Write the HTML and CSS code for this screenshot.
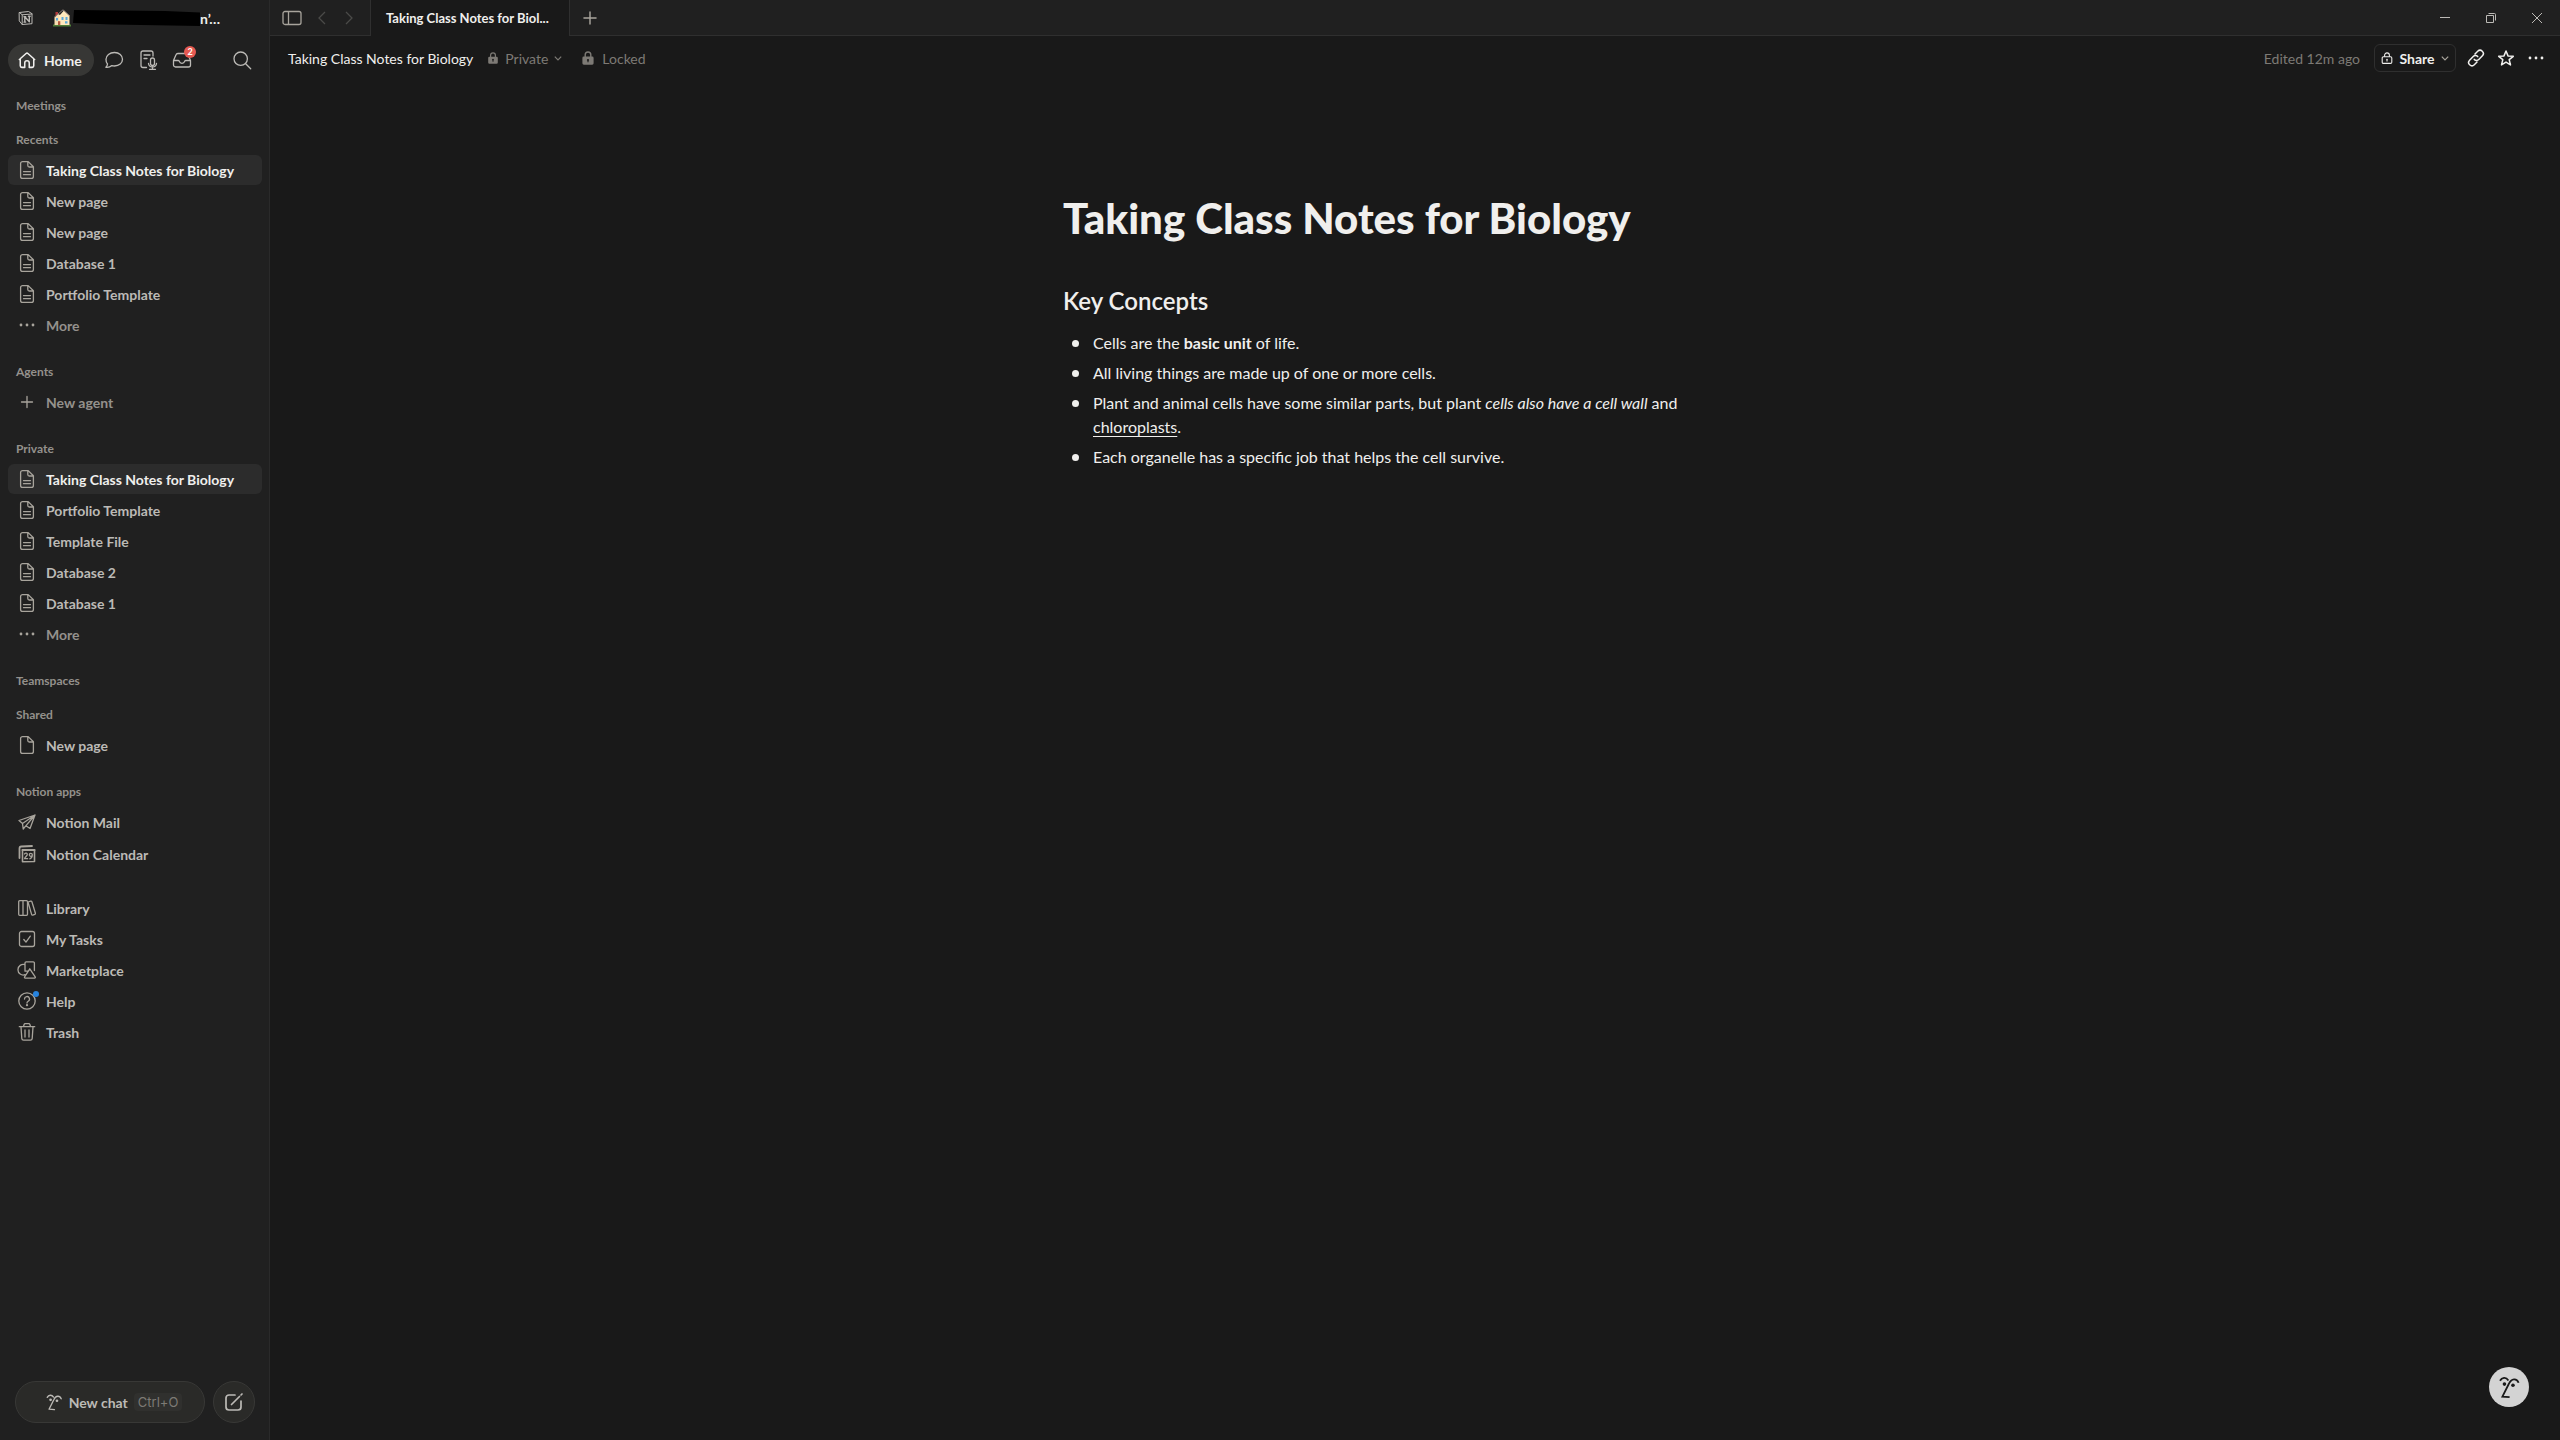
FILE: index.html
```html
<!DOCTYPE html>
<html lang="en">
<head>
  <meta charset="UTF-8">
  <meta name="viewport" content="width=device-width, initial-scale=1.0">
  <title>Taking Class Notes for Biology</title>
  <link rel="stylesheet" href="styles.css">
</head>
<body>
  <svg class="sprite" aria-hidden="true">
    <symbol id="i-page" viewBox="0 0 20 20"><path d="M5.6 1.6h5.6l5.2 5.2v9.6a2 2 0 0 1-2 2H5.6a2 2 0 0 1-2-2V3.600a2 2 0 0 1 2-2z M10.800 1.800v3.700a1.500 1.500 0 0 0 1.500 1.500h4"/></symbol>
    <symbol id="i-doc" viewBox="0 0 20 20"><use href="#i-page"/><path d="M6.500 11.600h7M6.500 14.700h7"/></symbol>
    <symbol id="i-dots" viewBox="0 0 20 20"><g fill="currentColor" stroke="none"><circle cx="4" cy="10" r="1.400"/><circle cx="10" cy="10" r="1.400"/><circle cx="16" cy="10" r="1.400"/></g></symbol>
    <symbol id="i-plus" viewBox="0 0 20 20"><path d="M10 4.500v11M4.500 10h11"/></symbol>
    <symbol id="i-chevron" viewBox="0 0 20 20"><path d="M2 6.500l8 8 8-8"/></symbol>
    <symbol id="i-lock" viewBox="0 0 20 20"><path d="M6 8.500V5.500a4 4 0 0 1 8 0v3" stroke-width="2"/><path fill="currentColor" stroke="none" fill-rule="evenodd" d="M4 8h12a2 2 0 0 1 2 2v7.500a2 2 0 0 1-2 2H4a2 2 0 0 1-2-2V10a2 2 0 0 1 2-2z M10 11.300a1.500 1.500 0 0 0-.8 2.800v2h1.600v-2a1.500 1.500 0 0 0-.8-2.800z"/></symbol>
    <symbol id="i-face" viewBox="0 0 20 20"><path stroke-width="1.500" d="M2.500 4.800C4 2 7.500 1.500 9.500 4.500M18 6.500C16.500 2.500 12 2.500 9.800 7.500L4.500 18l6 .5"/><g fill="currentColor" stroke="none"><circle cx="6.200" cy="7.600" r="1.500"/><circle cx="13.300" cy="8.600" r="1.500"/></g></symbol>
  </svg>

  <div class="app">
    <aside class="sidebar">
      <div class="workspace">
        <svg class="icon logo" viewBox="0 0 16 16"><path d="M1.500 2.500l9-1 3.500 2.200v10l-9.800.8-2.700-3.300zM1.500 2.500l2.700 2.300 9.800-.8M4.200 4.800v9.700"/><path stroke-width="1.400" d="M6.800 12V6.800l4.500 4.900V6.300M6 6.800h1.700M10.400 6.200h1.800M6 12.100h1.700"/></svg>
        <svg class="house" viewBox="0 0 18 18"><path fill="#4e7d36" d="M0 15.500h18v2H0z"/><path fill="#b23a3a" d="M2.500 3h2.500v4H2.500z"/><path fill="#f6ddb0" d="M1.500 8.500l4-3.500 4 3v8h-8z"/><path fill="#ffe9bd" d="M6 7l5-5.500 5.500 5.500v9H6z"/><path fill="none" stroke="#8d7f7a" stroke-width="1" d="M1 8.500L10 .8 17 7"/><path fill="#5ba9db" d="M3 9h2v2.500H3zM8.500 8h2v3h-2zM12.500 8h2v3h-2zM12 12.300h2.500v2.200H12z"/><path fill="#b2563d" d="M5 12.200h2.300V16H5z"/></svg>
        <svg class="redacted" viewBox="0 0 127 17"><path d="M1 0l91 1 35 1.500V16l-88-1.500L0 13z"/></svg>
        <span class="workspace-name">n’…</span>
      </div>

      <div class="shortcuts">
        <button class="home"><svg class="icon" viewBox="0 0 20 20"><path stroke-width="1.700" d="M1.500 9.500L9 2.800a1.500 1.500 0 0 1 2 0l7.500 6.700M2.500 8.700V16.500a1.700 1.700 0 0 0 1.700 1.700h3.300v-4.900a2.500 2.500 0 0 1 5 0v4.900h3.300a1.700 1.700 0 0 0 1.700-1.700V8.700"/></svg>Home</button>
        <button class="round" aria-label="Chat"><svg class="icon" viewBox="0 0 20 20"><path d="M10.500 2.500c4.700 0 8 3 8 6.800s-3.300 6.700-8 6.700c-1 0-1.800-.1-2.600-.4-1.600 1.400-3.700 2-6 1.700 1-1 1.500-2 1.600-3.300A6.700 6.700 0 0 1 2 9.300c0-3.800 3.700-6.800 8.500-6.800z"/></svg></button>
        <button class="round" aria-label="Meeting notes"><svg class="icon" viewBox="0 0 20 20"><path d="M8.500 17.500H5a2 2 0 0 1-2-2V3a2 2 0 0 1 2-2h8a2 2 0 0 1 2 2v3M6 5h6M6 8.500h3M12.500 10a2 2 0 0 1 4 0v3.500a2 2 0 0 1-4 0zM10.500 13.500c.3 2.300 2 3.500 4 3.500s3.700-1.200 4-3.500M14.500 17v2.300M11.500 19.300h6"/></svg></button>
        <button class="round" aria-label="Inbox"><svg class="icon" viewBox="0 0 20 20"><path d="M1.500 10.500L4 4.800A2 2 0 0 1 5.800 3.500h8.400A2 2 0 0 1 16 4.800l2.500 5.700v4.500a2 2 0 0 1-2 2h-13a2 2 0 0 1-2-2zM1.500 10.500h4.700c.4 0 .8.200 1 .6.500 1.500 1.500 2.200 2.800 2.200s2.300-.7 2.800-2.200c.2-.4.600-.6 1-.6h4.700"/></svg><span class="badge">2</span></button>
        <button class="round search" aria-label="Search"><svg class="icon" viewBox="0 0 20 20"><circle cx="8.700" cy="8.700" r="6.700"/><path d="M13.700 13.700l5 5"/></svg></button>
      </div>

      <nav>
        <section class="empty">
          <h2>Meetings</h2>
        </section>
        <section>
          <h2>Recents</h2>
          <a class="item active" href="#"><svg class="icon"><use href="#i-doc"/></svg>Taking Class Notes for Biology</a>
          <a class="item" href="#"><svg class="icon"><use href="#i-doc"/></svg>New page</a>
          <a class="item" href="#"><svg class="icon"><use href="#i-doc"/></svg>New page</a>
          <a class="item" href="#"><svg class="icon"><use href="#i-doc"/></svg>Database 1</a>
          <a class="item" href="#"><svg class="icon"><use href="#i-doc"/></svg>Portfolio Template</a>
          <a class="item muted" href="#"><svg class="icon"><use href="#i-dots"/></svg>More</a>
        </section>
        <section>
          <h2>Agents</h2>
          <a class="item muted" href="#"><svg class="icon"><use href="#i-plus"/></svg>New agent</a>
        </section>
        <section>
          <h2>Private</h2>
          <a class="item active" href="#"><svg class="icon"><use href="#i-doc"/></svg>Taking Class Notes for Biology</a>
          <a class="item" href="#"><svg class="icon"><use href="#i-doc"/></svg>Portfolio Template</a>
          <a class="item" href="#"><svg class="icon"><use href="#i-doc"/></svg>Template File</a>
          <a class="item" href="#"><svg class="icon"><use href="#i-doc"/></svg>Database 2</a>
          <a class="item" href="#"><svg class="icon"><use href="#i-doc"/></svg>Database 1</a>
          <a class="item muted" href="#"><svg class="icon"><use href="#i-dots"/></svg>More</a>
        </section>
        <section class="empty">
          <h2>Teamspaces</h2>
        </section>
        <section>
          <h2>Shared</h2>
          <a class="item" href="#"><svg class="icon"><use href="#i-page"/></svg>New page</a>
        </section>
        <section class="apps">
          <h2>Notion apps</h2>
          <a class="item" href="#"><svg class="icon" viewBox="0 0 20 20"><path d="M2 8.500L18 3l-5 13.500-4-2.800-2.800 3.300-.7-5.500zM5.500 11.500L18 3 9 13.700"/></svg>Notion Mail</a>
          <a class="item" href="#"><svg class="icon" viewBox="0 0 20 20"><path stroke-width="1.800" d="M2.500 14V4.500a2 2 0 0 1 1.800-2L15 2"/><path stroke-width="1.600" d="M5.500 6h12v11.500l-12 .3z"/><path stroke-width="2" d="M5.500 6h12"/><path stroke-width="1.300" d="M7.500 10c1-1.500 3-.8 2.800.7-.2 1.300-2.700 2.500-2.700 4h3M15.300 10.800a1.500 1.500 0 1 1-3 0 1.500 1.500 0 0 1 3 0c0 2.200-.8 3.500-2.500 4"/></svg>Notion Calendar</a>
        </section>
        <section>
          <a class="item" href="#"><svg class="icon" viewBox="0 0 20 20"><path d="M1.700 3.700a1 1 0 0 1 1-1H6v14.600H2.700a1 1 0 0 1-1-1zM6 2.700h3.500a1 1 0 0 1 1 1v12.600a1 1 0 0 1-1 1H6M11 4l2.700-.9a1 1 0 0 1 1.200.6l3.500 11.500a1 1 0 0 1-.6 1.200l-2 .7a1 1 0 0 1-1.200-.7z"/></svg>Library</a>
          <a class="item" href="#"><svg class="icon" viewBox="0 0 20 20"><rect x="2.500" y="2.500" width="15" height="15" rx="2"/><path d="M6.800 10.500l2.200 2.600 4.300-6"/></svg>My Tasks</a>
          <a class="item" href="#"><svg class="icon" viewBox="0 0 20 20"><path d="M8 14.700a5.300 5.300 0 1 1 0-10M8 8.500V3a1.200 1.200 0 0 1 1.200-1.200h7A1.200 1.200 0 0 1 17.400 3v7.500M12.800 8.800l5.400 8a.9.9 0 0 1-.7 1.400H8.300a.9.900 0 0 1-.7-1.400zM8 8.500v2.700h3"/></svg>Marketplace</a>
          <a class="item" href="#"><svg class="icon" viewBox="0 0 20 20"><circle cx="10" cy="10" r="8.200"/><path d="M7.500 8a2.500 2.500 0 1 1 3.700 2.200c-.8.500-1.200.9-1.200 1.800"/><circle cx="10" cy="14.200" r=".5"/></svg><span class="dot"></span>Help</a>
          <a class="item" href="#"><svg class="icon" viewBox="0 0 20 20"><path d="M2.300 4.700h15.400M6.500 4.500l.6-2a1.200 1.200 0 0 1 1.100-.8h3.600a1.200 1.200 0 0 1 1.100.8l.6 2M4 5l.8 11.500a1.800 1.800 0 0 0 1.800 1.700h6.800a1.800 1.800 0 0 0 1.800-1.700L16 5M8 8v7M12 8v7"/></svg>Trash</a>
        </section>
      </nav>

      <div class="sidebar-footer">
        <button class="new-chat"><svg class="icon"><use href="#i-face"/></svg>New chat <kbd>Ctrl+O</kbd></button>
        <button class="compose" aria-label="New page"><svg class="icon" viewBox="0 0 20 20"><path stroke-width="1.700" d="M11 3H5a3 3 0 0 0-3 3v9a3 3 0 0 0 3 3h9a3 3 0 0 0 3-3V9M7.500 12.500l8-8M17 3l1-1"/></svg></button>
      </div>
    </aside>

    <main>
      <header class="tabbar">
        <div class="controls">
          <button class="toggle" aria-label="Toggle sidebar"><svg viewBox="0 0 20 16"><rect x="1" y="1.500" width="18" height="13" rx="2"/><path d="M6.500 1.500v13"/></svg></button>
          <button class="arrow" aria-label="Back"><svg viewBox="0 0 14 14"><path d="M10 1L4 7l6 6"/></svg></button>
          <button class="arrow" aria-label="Forward"><svg viewBox="0 0 14 14"><path d="M4 1l6 6-6 6"/></svg></button>
        </div>
        <div class="tab">Taking Class Notes for Biol...</div>
        <div class="tabbar-rest">
          <button class="add-tab" aria-label="New tab"><svg class="icon"><use href="#i-plus"/></svg></button>
          <div class="window-buttons">
            <button aria-label="Minimize"><svg viewBox="0 0 10 10"><path d="M0 4.500h10"/></svg></button>
            <button aria-label="Restore"><svg viewBox="0 0 10 10"><path d="M.5 2.500h7v7h-7zM2.500.5h6a1 1 0 0 1 1 1v6"/></svg></button>
            <button aria-label="Close"><svg viewBox="0 0 10 10"><path d="M0 0l10 10M10 0L0 10"/></svg></button>
          </div>
        </div>
      </header>

      <div class="page-bar">
        <a class="crumb" href="#">Taking Class Notes for Biology</a>
        <button class="status private"><svg class="lock"><use href="#i-lock"/></svg>Private<svg class="chevron"><use href="#i-chevron"/></svg></button>
        <button class="status locked"><svg class="lock"><use href="#i-lock"/></svg>Locked</button>
        <span class="edited">Edited 12m ago</span>
        <button class="share"><svg class="lock" viewBox="0 0 20 20"><rect x="2" y="8" width="16" height="11" rx="2" stroke-width="1.800"/><path stroke-width="1.800" d="M6 8V5.500a4 4 0 0 1 8 0V8M10 12v4"/><circle cx="10" cy="12.500" r=".8"/></svg>Share<svg class="chevron"><use href="#i-chevron"/></svg></button>
        <div class="page-actions">
          <button aria-label="Copy link"><svg class="icon" viewBox="0 0 20 20"><path d="M9 6l2.700-2.700a3.100 3.100 0 0 1 4.700 4.500l-3.600 3.700a3.100 3.100 0 0 1-4.500-.1M11 14l-2.700 2.700a3.100 3.100 0 0 1-4.700-4.500l3.600-3.700a3.100 3.100 0 0 1 4.500.1"/></svg></button>
          <button aria-label="Favorite"><svg class="icon" viewBox="0 0 20 20"><path d="M10 3l2 4.900 5.300.4-4.100 3.400 1.300 5.200L10 14.100l-4.500 2.800 1.300-5.200-4.100-3.400 5.300-.4z"/></svg></button>
          <button aria-label="More"><svg class="icon"><use href="#i-dots"/></svg></button>
        </div>
      </div>

      <article>
        <h1>Taking Class Notes for Biology</h1>
        <h2>Key Concepts</h2>
        <ul>
          <li>Cells are the <b>basic unit</b> of life.</li>
          <li>All living things are made up of one or more cells.</li>
          <li>Plant and animal cells have some similar parts, but plant <i>cells also have a cell wall</i> and <u>chloroplasts</u>.</li>
          <li>Each organelle has a specific job that helps the cell survive.</li>
        </ul>
      </article>

      <button class="ai" aria-label="Ask AI"><svg><use href="#i-face"/></svg></button>
    </main>
  </div>
</body>
</html>
```
FILE: styles.css
```css
* {
  box-sizing: border-box;
}
body {
  margin: 0;
  background: #191919;
  color: #f0efed;
  font-family: Lato, "Open Sans", sans-serif;
  font-size: 14px;
}
button {
  display: flex;
  align-items: center;
  justify-content: center;
  padding: 0;
  border: 0;
  background: none;
  color: inherit;
  font: inherit;
  cursor: pointer;
}
a {
  color: inherit;
  text-decoration: none;
}
svg {
  flex: none;
  fill: none;
  stroke: currentColor;
}
.sprite {
  display: none;
}
.icon {
  width: 20px;
  height: 20px;
  stroke-width: 1.3;
  stroke-linecap: round;
  stroke-linejoin: round;
}
.app {
  display: flex;
  min-height: 100vh;
}

/* sidebar */
.sidebar {
  display: flex;
  flex-direction: column;
  width: 270px;
  padding: 0 7px 0 8px;
  background: #202020;
  border-right: 1px solid #2a2a2a;
  color: #bcbab6;
}
.workspace {
  display: flex;
  align-items: center;
  height: 36px;
  padding-left: 10px;
}
.workspace .logo {
  width: 16px;
  height: 16px;
  stroke-width: 1;
}
.house {
  width: 18px;
  height: 18px;
  margin-left: 19px;
  stroke: none;
}
.redacted {
  width: 127px;
  height: 17px;
  margin-left: 2px;
  fill: #000;
  stroke: none;
}
.workspace-name {
  color: #f0efed;
  font-weight: 700;
}
.shortcuts {
  display: flex;
  align-items: center;
  height: 32px;
  margin: 8px 0 15px;
}
.home {
  justify-content: flex-start;
  gap: 8px;
  width: 86px;
  height: 32px;
  margin-right: 3px;
  padding-left: 10px;
  border-radius: 16px;
  background: #373735;
  color: #f0efed;
  font-weight: 700;
}
.home .icon {
  width: 18px;
  height: 18px;
}
.round {
  position: relative;
  width: 34px;
  height: 32px;
}
.search {
  margin-left: auto;
  margin-right: 3px;
}
.badge {
  position: absolute;
  top: 2px;
  right: 3px;
  width: 12px;
  height: 12px;
  border-radius: 50%;
  background: #e65a52;
  color: #fff;
  font-size: 9px;
  font-weight: 700;
  line-height: 12px;
  text-align: center;
}
nav section {
  display: flex;
  flex-direction: column;
  gap: 1px;
  margin-bottom: 17px;
}
nav .empty {
  margin-bottom: 5px;
}
nav .apps {
  gap: 2px;
  margin-bottom: 24px;
}
nav h2 {
  margin: 0 0 -1px;
  padding: 0 8px;
  color: #94918c;
  font-size: 12px;
  font-weight: 700;
  line-height: 30px;
}
nav .apps h2 {
  margin-bottom: -2px;
}
.item {
  position: relative;
  display: flex;
  align-items: center;
  gap: 9px;
  height: 30px;
  padding: 0 9px;
  border-radius: 6px;
  font-weight: 700;
}
.item .icon {
  color: #a8a49c;
}
.item.active {
  background: #2c2c2c;
  color: #f0efed;
}
.item.muted {
  color: #94918c;
}
.dot {
  position: absolute;
  top: 5px;
  left: 25px;
  width: 6px;
  height: 6px;
  border-radius: 50%;
  background: #2783de;
}
.sidebar-footer {
  display: flex;
  gap: 8px;
  margin-top: auto;
  padding: 0 7px 17px 7px;
}
.new-chat,
.compose {
  height: 42px;
  border: 1px solid #383836;
  border-radius: 21px;
  background: #2a2a28;
}
.new-chat {
  flex: 1;
  gap: 6px;
  padding-left: 7px;
  font-weight: 700;
}
.new-chat .icon {
  width: 18px;
}
.new-chat kbd {
  padding: 0 4px;
  border-radius: 4px;
  background: #30302e;
  color: #7d7a75;
  font: 13px/18px Inter, sans-serif;
}
.compose {
  width: 42px;
}

/* tabs */
main {
  display: flex;
  flex-direction: column;
  flex: 1;
}
.tabbar {
  display: flex;
  height: 36px;
}
.controls,
.tabbar-rest {
  display: flex;
  align-items: center;
  background: #202020;
  border-bottom: 1px solid #2f2f2f;
}
.controls {
  gap: 13px;
  padding: 0 14px 0 12px;
  border-right: 1px solid #2f2f2f;
}
.toggle svg {
  width: 20px;
  height: 16px;
  color: #a8a49c;
  stroke-width: 1.3;
}
.arrow svg {
  width: 14px;
  height: 14px;
  color: #4a4a48;
  stroke-width: 1.3;
}
.tab {
  display: flex;
  align-items: center;
  width: 198px;
  padding: 0 15px;
  font-size: 13px;
  font-weight: 700;
  white-space: nowrap;
}
.tabbar-rest {
  flex: 1;
  justify-content: space-between;
  padding: 0 18px 0 9px;
  border-left: 1px solid #2f2f2f;
}
.add-tab {
  color: #a8a49c;
}
.add-tab .icon {
  width: 22px;
  height: 22px;
}
.window-buttons {
  display: flex;
  gap: 36px;
  color: #bcbab6;
}
.window-buttons svg {
  width: 10px;
  height: 10px;
}

/* page header */
.page-bar {
  display: flex;
  align-items: center;
  height: 44px;
  padding: 0 14px 0 18px;
}
.status {
  gap: 6px;
  color: #7d7a75;
}
.private {
  margin-left: 14px;
}
.locked {
  gap: 7px;
  margin-left: 19px;
}
.private .lock,
.share .lock {
  width: 12px;
  height: 14px;
}
.locked .lock {
  width: 14px;
  height: 18px;
}
.chevron {
  width: 8px;
  height: 8px;
  stroke-width: 3;
}
.edited {
  margin-left: auto;
  color: #7d7a75;
}
.share {
  gap: 6px;
  width: 82px;
  height: 28px;
  margin: 0 10px 0 14px;
  border: 1px solid #2f2f2f;
  border-radius: 6px;
  font-weight: 700;
}
.share .chevron {
  color: #a8a49c;
}
.page-actions {
  display: flex;
  gap: 10px;
}
.page-actions .icon {
  stroke-width: 1.5;
}

/* page content */
article {
  width: 100%;
  max-width: 704px;
  margin: 114px auto 0;
}
article h1 {
  margin: 0;
  font-size: 42px;
  font-weight: 900;
  line-height: 48px;
}
article h2 {
  margin: 43px 0 11px;
  font-size: 24px;
  font-weight: 600;
  line-height: 32px;
}
article ul {
  margin: 0;
  padding: 0 0 0 30px;
  font-size: 16px;
  line-height: 24px;
  list-style: none;
}
article li {
  padding: 3px 0;
}
article li::before {
  content: "";
  display: inline-block;
  width: 7px;
  height: 7px;
  margin: 0 14px 0 -21px;
  border-radius: 50%;
  background: currentColor;
  vertical-align: 2px;
}
article u {
  text-underline-offset: 3px;
}

.ai {
  position: fixed;
  right: 31px;
  bottom: 33px;
  width: 40px;
  height: 40px;
  border-radius: 50%;
  background: #d3d3d3;
  color: #191919;
}
.ai svg {
  width: 24px;
  height: 24px;
  stroke-width: 1.5;
}
```
